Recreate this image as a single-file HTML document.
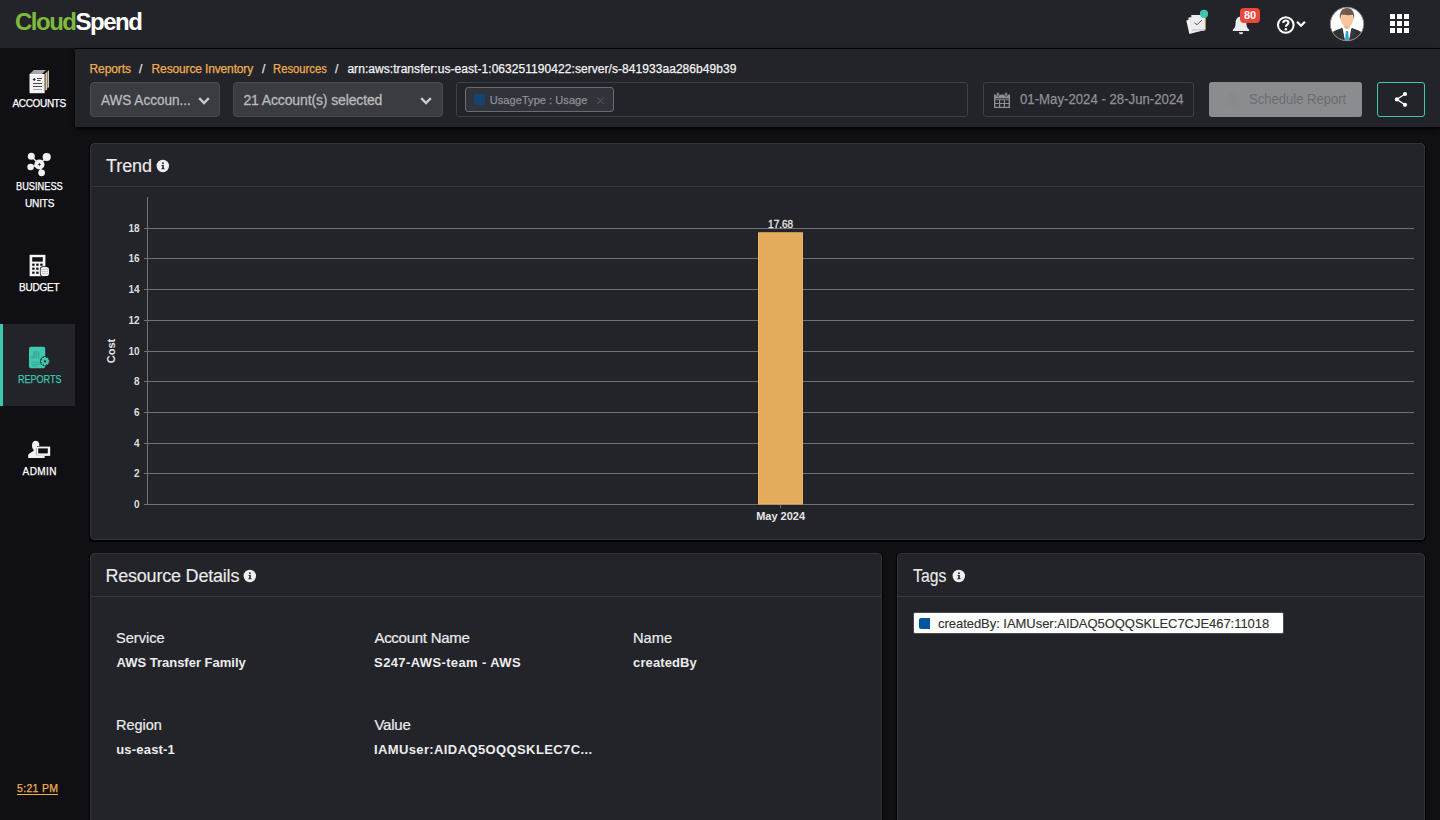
<!DOCTYPE html>
<html lang="en">
<head>
<meta charset="utf-8">
<title>CloudSpend - Resource</title>
<style>
*{box-sizing:border-box;margin:0;padding:0}
html,body{width:1440px;height:820px;overflow:hidden;background:#101014;font-family:"Liberation Sans",sans-serif;color:#e8e8e8}
.abs{position:absolute;white-space:nowrap}
#header{position:absolute;left:0;top:0;width:1440px;height:48px;background:#23242a}
#hline{position:absolute;left:75px;top:48px;width:1365px;height:1px;background:#050506}
#logo{position:absolute;left:15px;top:7px;font-size:24px;font-weight:bold;letter-spacing:-1.5px;line-height:30px;white-space:nowrap}
#logo .g{color:#7fba3c}
#logo .w{color:#fff}
#sidebar{position:absolute;left:0;top:48px;width:75px;height:772px;background:#101014}
.nav{-webkit-text-stroke:0.25px;position:absolute;left:0;width:75px;text-align:center;font-size:10px;color:#fff;line-height:16px;white-space:nowrap}
.nav.active{color:#3cc7b0}
#navact{position:absolute;left:0;top:324px;width:75px;height:82px;background:#23242a}
#navbar{position:absolute;left:0;top:324px;width:3px;height:82px;background:#3cc7b0}
#toolbar{position:absolute;left:75px;top:49px;width:1365px;height:78px;background:#23242a;box-shadow:0 2px 4px rgba(0,0,0,.85)}
.crumb{-webkit-text-stroke:0.25px;position:absolute;top:61px;font-size:12px;line-height:16px;white-space:nowrap;color:#f0ad4e}
.sep{color:#e0e0e0}
.dd{position:absolute;top:82px;height:35px;background:#3b3c41;border:1px solid #4b4c51;border-radius:4px}
.ddt{-webkit-text-stroke:0.3px;position:absolute;top:92px;font-size:14px;line-height:17px;color:#b9babd;white-space:nowrap}
.panel{position:absolute;background:#23242a;border:1px solid #34353a;border-radius:4px;box-shadow:0 1px 1px 0.5px #000}
.ptitle{-webkit-text-stroke:0.12px;position:absolute;font-size:18px;line-height:22px;color:#ececec;white-space:nowrap}
.pline{position:absolute;height:1px;background:#36373c}
.lbl{-webkit-text-stroke:0.2px;position:absolute;font-size:15px;line-height:18px;color:#ececec;white-space:nowrap}
.val{position:absolute;font-size:13px;line-height:16px;color:#ececec;font-weight:bold;white-space:nowrap}
</style>
</head>
<body>
<div id="header"></div>
<div id="hline"></div>
<div id="logo"><span class="g">Cloud</span><span class="w">Spend</span></div>

<!-- header icons -->
<svg class="abs" style="left:1180px;top:5px" width="35" height="35" viewBox="1180 5 35 35">
  <path d="M1186.3 20.6 L1199.6 16.6 L1203.6 30.2 L1189.4 34.1 Z" fill="#f1f1f3"/>
  <path d="M1188.6 17.6 L1202 15.8 L1204.8 30.4 L1190.6 32.2 Z" fill="#e4e4ea"/>
  <path d="M1188.9 17.9 L1190.8 32 " stroke="#fff" stroke-width="0.8"/>
  <rect x="1191.3" y="15" width="14.2" height="14.6" fill="#ededee"/>
  <path d="M1191.6 29.9 H1205.3" stroke="#b5b5b8" stroke-width="0.7"/>
  <path d="M1205.3 17 V29.8" stroke="#e0a040" stroke-width="0.7"/>
  <path d="M1194.4 22.8 L1197 24.7 L1202 20" fill="none" stroke="#4d3f80" stroke-width="0.9"/>
  <circle cx="1204" cy="13.9" r="4.1" fill="#3fc4b0"/>
</svg>
<svg class="abs" style="left:1230px;top:14px" width="22" height="22" viewBox="0 0 22 22">
  <path d="M11 2.6 C7.2 2.6 5.6 5.8 5.6 9 C5.6 12.6 4.6 14.2 2.8 15.8 V16.9 H19.2 V15.8 C17.4 14.2 16.4 12.6 16.4 9 C16.4 5.8 14.8 2.6 11 2.6 Z" fill="#ececec"/>
  <path d="M8.8 18.2 H13.2 C13.2 19.4 12.2 20.2 11 20.2 C9.8 20.2 8.8 19.4 8.8 18.2 Z" fill="#ececec"/>
</svg>
<div class="abs" id="badge" style="left:1240px;top:8px;width:20px;height:15px;background:#e8473a;border-radius:4px"></div>
<div class="abs" id="badget" style="left:1244px;top:9px;font-size:11px;line-height:13px;font-weight:bold;color:#fff;letter-spacing:-0.2px">80</div>
<svg class="abs" style="left:1275px;top:14px" width="36" height="22" viewBox="0 0 36 22">
  <circle cx="10.8" cy="11" r="7.8" fill="none" stroke="#fff" stroke-width="2"/>
  <path d="M8.3 8.9 C8.3 7.3 9.4 6.5 10.8 6.5 C12.3 6.5 13.4 7.4 13.4 8.7 C13.4 10.6 10.9 10.6 10.9 12.7" fill="none" stroke="#fff" stroke-width="2.1"/>
  <circle cx="10.9" cy="15.3" r="1.3" fill="#fff"/>
  <path d="M22 7.8 L26 11.8 L30 7.8" fill="none" stroke="#fff" stroke-width="2.2"/>
</svg>
<svg class="abs" style="left:1329px;top:6px" width="36" height="36" viewBox="0 0 36 36">
  <defs><clipPath id="avc"><circle cx="18" cy="18" r="16.3"/></clipPath></defs>
  <circle cx="18" cy="18" r="16.7" fill="#fff" stroke="#8a8a8a" stroke-width="1"/>
  <g clip-path="url(#avc)">
    <path d="M1 36 V30 C1 26 8 24 13 22 L18 27 L23 22 C28 24 35 26 35 30 V36 Z" fill="#303030"/>
    <path d="M13.6 21.5 L18 20 L22.4 21.5 L20 36 H16 Z" fill="#fff"/>
    <path d="M16.9 25 H19.1 L20 34.5 H16 Z" fill="#2ea3dc"/>
    <path d="M13 22 L15.8 34 L10 28 L12.4 26.4 L10.4 24.6 Z" fill="#3b3b3b"/>
    <path d="M23 22 L20.2 34 L26 28 L23.6 26.4 L25.6 24.6 Z" fill="#3b3b3b"/>
    <path d="M15.2 17 H20.8 V21.6 L18 23.4 L15.2 21.6 Z" fill="#e9b68c"/>
    <ellipse cx="18" cy="13.5" rx="6.2" ry="6.9" fill="#f6c79c"/>
    <path d="M11.2 14 C9.6 6.5 13 2 18.1 2 C23.2 2 26.4 6.5 24.8 14 C24.7 11.5 24.1 9.6 23.3 8.7 C20.5 9.5 15 9.1 12.9 8.5 C12 9.5 11.4 11.5 11.2 14 Z" fill="#6e5c4b"/>
  </g>
</svg>
<svg class="abs" style="left:1390px;top:14px" width="19" height="19" viewBox="0 0 19 19" fill="#fff">
  <rect x="0" y="0" width="5" height="5"/><rect x="7" y="0" width="5" height="5"/><rect x="14" y="0" width="5" height="5"/>
  <rect x="0" y="7" width="5" height="5"/><rect x="7" y="7" width="5" height="5"/><rect x="14" y="7" width="5" height="5"/>
  <rect x="0" y="14" width="5" height="5"/><rect x="7" y="14" width="5" height="5"/><rect x="14" y="14" width="5" height="5"/>
</svg>

<div id="sidebar"></div>
<div id="navact"></div><div id="navbar"></div>

<!-- sidebar icons -->
<svg class="abs" style="left:29px;top:69px" width="21" height="25" viewBox="0 0 21 25">
  <path d="M0.6 5.2 L4.8 1 H17.2 L13.2 5.2 Z" fill="#a7a7ab"/>
  <path d="M16.5 4.4 L17.9 3 V20.2 L16.5 21.8 Z" fill="#efefef"/>
  <path d="M18.5 2.4 L19.9 1.2 V18 L18.5 19.6 Z" fill="#efefef"/>
  <path d="M19.6 1.4 L19.9 1.2 V18 L19.6 18.3 Z" fill="#e0a040"/>
  <path d="M17.6 3.3 L17.9 3 V20.2 L17.6 20.5 Z" fill="#e0a040"/>
  <rect x="0.5" y="5" width="15.1" height="19.2" fill="#f3f3f3"/>
  <path d="M15.2 5 V24.2 H15.7 V5 Z" fill="#e0a040"/>
  <path d="M13 5.1 L15.7 2.4 L15.7 5.1 Z" fill="#15151a"/>
  <path d="M15 3.1 L17.7 0.6 L17.9 2.8 Z" fill="#15151a"/>
  <rect x="8" y="9" width="5" height="1" fill="#4a4b52"/>
  <rect x="8" y="11" width="3.6" height="1" fill="#4a4b52"/>
  <path d="M5.2 8.9 L6.8 10.5 L5.2 12.1 L3.6 10.5 Z" fill="#22222a"/>
  <rect x="4" y="14" width="9" height="1" fill="#4a4b52"/>
  <rect x="4" y="17" width="9" height="1" fill="#4a4b52"/>
  <rect x="4" y="20" width="9" height="1" fill="#a9a9ad"/>
</svg>
<svg class="abs" style="left:26px;top:151px" width="26" height="26" viewBox="0 0 26 26">
  <g stroke="#f0f0f0" stroke-width="1.3">
    <line x1="13.4" y1="13.5" x2="5.3" y2="5.2"/><line x1="13.4" y1="13.5" x2="20.7" y2="6"/>
    <line x1="13.4" y1="13.5" x2="4.6" y2="16"/><line x1="13.4" y1="13.5" x2="15.6" y2="21.8"/>
  </g>
  <g fill="#f0f0f0">
    <circle cx="13.4" cy="13.5" r="5.1"/><circle cx="5.3" cy="5.2" r="3.5"/><circle cx="20.7" cy="6" r="4.1"/>
    <circle cx="4.6" cy="16" r="3.3"/><circle cx="15.6" cy="21.8" r="3.4"/>
  </g>
  <path d="M13.4 12.2 V14.8 M12.1 13.5 H14.7" stroke="#22232a" stroke-width="0.9"/>
</svg>
<svg class="abs" style="left:29px;top:254px" width="21" height="23" viewBox="0 0 21 23">
  <rect x="0.6" y="0.8" width="15.8" height="21.4" fill="#f4f4f4"/>
  <rect x="3.2" y="3.2" width="10.6" height="4.4" fill="#111115"/>
  <g fill="#111115">
    <rect x="3.2" y="9.6" width="2.4" height="2.2"/><rect x="7.2" y="9.6" width="2.4" height="2.2"/><rect x="11.2" y="9.6" width="2.4" height="2.2"/>
    <rect x="3.2" y="13.6" width="2.4" height="2.2"/><rect x="7.2" y="13.6" width="2.4" height="2.2"/>
    <rect x="3.2" y="17.6" width="2.4" height="2.2"/><rect x="7.2" y="17.6" width="2.4" height="2.2"/>
  </g>
  <rect x="10.9" y="12.2" width="9.6" height="10.4" rx="3.2" fill="#111115"/>
  <rect x="11.6" y="12.9" width="8.4" height="9.2" rx="2.8" fill="#f4f4f4"/>
  <g fill="#b9b9bd"><rect x="12.4" y="15.2" width="6.8" height="0.7"/><rect x="12.4" y="17.2" width="6.8" height="0.7"/><rect x="12.4" y="19.2" width="6.8" height="0.7"/></g>
</svg>
<svg class="abs" style="left:28px;top:346px" width="23" height="23" viewBox="0 0 23 23">
  <rect x="1" y="0.8" width="16.2" height="21.4" rx="1.8" fill="#41c8b3"/>
  <g fill="#36a997">
    <rect x="3.4" y="9.8" width="1.6" height="2.8"/><rect x="5.4" y="5.2" width="1.6" height="7.4"/><rect x="7.6" y="5.2" width="1.6" height="7.4"/><rect x="9.8" y="5.2" width="1.6" height="7.4"/>
    <rect x="3.4" y="15.8" width="8.6" height="0.9"/><rect x="3.4" y="17.8" width="8.6" height="0.9"/><rect x="3.4" y="19.6" width="6.6" height="0.9"/>
  </g>
  <circle cx="17" cy="15.3" r="5" fill="#23242a"/>
  <g transform="translate(17,15.3)" fill="#41c8b3">
    <circle r="3.3"/>
    <rect x="-1.1" y="-4.3" width="2.2" height="8.6"/>
    <rect x="-1.1" y="-4.3" width="2.2" height="8.6" transform="rotate(45)"/>
    <rect x="-1.1" y="-4.3" width="2.2" height="8.6" transform="rotate(90)"/>
    <rect x="-1.1" y="-4.3" width="2.2" height="8.6" transform="rotate(135)"/>
    <circle r="1.1" fill="#1c1d22"/>
  </g>
</svg>
<svg class="abs" style="left:27px;top:440px" width="25" height="19" viewBox="0 0 25 19">
  <path d="M9 0.8 C6.4 0.8 5 2.8 5 5.4 C5 7.6 5.8 9 6.8 10 C6.8 12 2 12.6 1.2 15 V17.9 H17.6 V16 H10 V6 H12.4 C12.4 3 11.4 0.8 9 0.8 Z" fill="#f2f2f2"/>
  <rect x="9.3" y="6.6" width="13.9" height="9.3" fill="#f2f2f2"/>
  <rect x="11.2" y="8.4" width="9.6" height="5" fill="#111115"/>
  <path d="M9.4 8 V15.6" stroke="#9a6fc0" stroke-width="0.6"/>
</svg>

<div class="nav" id="n1" style="left:12.50px;top:96px;letter-spacing:-0.332px;width:auto;text-align:left;transform:scale(1,1);transform-origin:0 72%">ACCOUNTS</div>
<div class="nav" id="n2" style="left:15.70px;top:179px;letter-spacing:0.000px;width:auto;text-align:left;transform:scale(0.9233,1);transform-origin:0 72%">BUSINESS</div>
<div class="nav" id="n2b" style="left:25.00px;top:196px;letter-spacing:-0.125px;width:auto;text-align:left;transform:scale(1,1);transform-origin:0 72%">UNITS</div>
<div class="nav" id="n3" style="left:19.00px;top:280px;letter-spacing:-0.234px;width:auto;text-align:left;transform:scale(1,1);transform-origin:0 72%">BUDGET</div>
<div class="nav active" id="n4" style="left:17.90px;top:372px;letter-spacing:0.000px;width:auto;text-align:left;transform:scale(0.9030,1);transform-origin:0 72%">REPORTS</div>
<div class="nav" id="n5" style="left:22.60px;top:464px;letter-spacing:0.391px;width:auto;text-align:left;transform:scale(1,1);transform-origin:0 72%">ADMIN</div>
<div class="abs" id="clock" style="left:17.00px;top:780px;font-size:10.5px;line-height:16px;color:#f0ad4e;letter-spacing:0.315px;-webkit-text-stroke:0.25px">5:21 PM</div>
<div class="abs" style="left:17px;top:794px;width:41px;height:1px;background:#f0ad4e"></div>

<div id="toolbar"></div>
<div class="crumb" id="c1" style="left:89.50px;;letter-spacing:-0.081px">Reports</div>
<div class="crumb sep" id="s1" style="left:139px">/</div>
<div class="crumb" id="c2" style="left:151.60px;;letter-spacing:-0.143px">Resource Inventory</div>
<div class="crumb sep" id="s2" style="left:262px">/</div>
<div class="crumb" id="c3" style="left:273.20px;;letter-spacing:0.000px;transform:scaleX(0.9388);transform-origin:0 50%">Resources</div>
<div class="crumb sep" id="s3" style="left:335px">/</div>
<div class="crumb" id="c4" style="left:347.40px;color:#f2f2f2;letter-spacing:0.056px">arn:aws:transfer:us-east-1:063251190422:server/s-841933aa286b49b39</div>

<div class="dd" style="left:90px;width:130px"></div>
<div class="ddt" id="d1" style="left:101.40px;;letter-spacing:0.000px;transform:scaleX(0.9671);transform-origin:0 50%">AWS Accoun...</div>
<svg class="abs" style="left:197px;top:95px" width="14" height="12" viewBox="0 0 14 12"><path d="M2.2 3.2 L7 8 L11.8 3.2" fill="none" stroke="#c9cacc" stroke-width="2.4"/></svg>
<div class="dd" style="left:233px;width:210px"></div>
<div class="ddt" id="d2" style="left:243.40px;;letter-spacing:-0.125px">21 Account(s) selected</div>
<svg class="abs" style="left:419px;top:95px" width="14" height="12" viewBox="0 0 14 12"><path d="M2.2 3.2 L7 8 L11.8 3.2" fill="none" stroke="#c9cacc" stroke-width="2.4"/></svg>

<div class="abs" style="left:456px;top:82px;width:512px;height:35px;border:1px solid #3e3f44;border-radius:3px"></div>
<div class="abs" style="left:465px;top:87px;width:149px;height:25px;border:1px solid #696b70;border-radius:3px;background:#31333a"></div>
<div class="abs" style="left:474px;top:94px;width:11px;height:11px;background:#15426f"></div>
<div class="abs" id="chipt" style="left:489.80px;top:92px;font-size:11px;line-height:16px;color:#8e9095;letter-spacing:0.060px;-webkit-text-stroke:0.25px">UsageType : Usage</div>
<svg class="abs" style="left:596px;top:96px" width="9" height="9" viewBox="0 0 9 9"><path d="M1.2 1.4 L7.8 8 M7.8 1.4 L1.2 8" stroke="#5c5e63" stroke-width="1"/></svg>

<div class="abs" style="left:983px;top:82px;width:211px;height:35px;border:1px solid #3e3f44;border-radius:3px"></div>
<svg class="abs" style="left:993px;top:92px" width="18" height="17" viewBox="0 0 18 17">
  <path d="M1 2.6 H17 V16 H1 Z" fill="#8d8f93"/>
  <rect x="3.6" y="0.6" width="2.6" height="3.6" rx="0.8" fill="#8d8f93" stroke="#23242a" stroke-width="0.6"/>
  <rect x="11.8" y="0.6" width="2.6" height="3.6" rx="0.8" fill="#8d8f93" stroke="#23242a" stroke-width="0.6"/>
  <g fill="#23242a">
    <rect x="2.2" y="6.4" width="13.6" height="0.9"/>
    <rect x="2.4" y="8.2" width="3.6" height="2.8"/><rect x="7.2" y="8.2" width="3.6" height="2.8"/><rect x="12" y="8.2" width="3.6" height="2.8"/>
    <rect x="2.4" y="12" width="3.6" height="2.8"/><rect x="7.2" y="12" width="3.6" height="2.8"/><rect x="12" y="12" width="3.6" height="2.8"/>
  </g>
</svg>
<div class="abs" id="datet" style="left:1020.00px;top:91px;font-size:14px;line-height:17px;color:#8d8f93;letter-spacing:0.000px;transform:scaleX(0.9427);transform-origin:0 50%;-webkit-text-stroke:0.25px">01-May-2024 - 28-Jun-2024</div>

<div class="abs" style="left:1209px;top:82px;width:153px;height:35px;background:#8b8c90;border-radius:3px"></div>
<svg class="abs" style="left:1226px;top:92px" width="16" height="16" viewBox="0 0 16 16"><path d="M2 1 H9 L12 4 V8 A4 4 0 1 1 8 14.6 H2 Z" fill="#888a8d"/></svg>
<div class="abs" id="schedt" style="left:1248.80px;top:91px;font-size:14px;line-height:17px;color:#6b6c71;letter-spacing:0.000px;transform:scaleX(0.9320);transform-origin:0 50%">Schedule Report</div>
<div class="abs" style="left:1377px;top:82px;width:48px;height:35px;border:1px solid #3cc7b0;border-radius:3px;background:#23242a"></div>
<svg class="abs" style="left:1393px;top:90px" width="16" height="19" viewBox="0 0 16 19">
  <path d="M12 4 L3.8 9.4 L12 14.8" fill="none" stroke="#fff" stroke-width="1.3"/>
  <circle cx="12" cy="4" r="2.1" fill="#fff"/><circle cx="3.9" cy="9.4" r="2.1" fill="#fff"/><circle cx="12" cy="14.8" r="2.1" fill="#fff"/>
</svg>

<!-- Trend panel -->
<div class="panel" id="trend" style="left:90px;top:143px;width:1335px;height:397px"></div>
<div class="ptitle" id="t1" style="left:105.90px;top:155px;letter-spacing:-0.040px">Trend</div>
<svg class="abs info" style="left:156px;top:159px" width="14" height="14" viewBox="0 0 14 14"><circle cx="6.8" cy="7" r="6.2" fill="#f0f0f0"/><path d="M5.6 5.9 H7.8 V9.2 H8.6 V10.2 H5.4 V9.2 H6.2 V6.9 H5.6 Z" fill="#23242a"/><circle cx="6.95" cy="4.3" r="0.95" fill="#23242a"/></svg>
<div class="pline" style="left:91px;top:186px;width:1333px"></div>

<svg class="abs" id="chart" style="left:91px;top:187px" width="1333" height="352" viewBox="91 187 1333 352">
  <g stroke="#707175" stroke-width="1" shape-rendering="crispEdges">
    <line x1="147.5" y1="197" x2="147.5" y2="505"/>
    <line x1="144" y1="228.5" x2="1414" y2="228.5"/>
    <line x1="144" y1="258.5" x2="1414" y2="258.5"/>
    <line x1="144" y1="289.5" x2="1414" y2="289.5"/>
    <line x1="144" y1="320.5" x2="1414" y2="320.5"/>
    <line x1="144" y1="351.5" x2="1414" y2="351.5"/>
    <line x1="144" y1="381.5" x2="1414" y2="381.5"/>
    <line x1="144" y1="412.5" x2="1414" y2="412.5"/>
    <line x1="144" y1="443.5" x2="1414" y2="443.5"/>
    <line x1="144" y1="473.5" x2="1414" y2="473.5"/>
    <line x1="144" y1="504.5" x2="1414" y2="504.5"/>
    <line x1="780.5" y1="505" x2="780.5" y2="508"/>
  </g>
  <rect x="758.5" y="232.8" width="44" height="271.2" fill="#e5ab5c" stroke="#f0b45e" stroke-width="1"/>
  <g font-family="Liberation Sans, sans-serif" font-size="10" font-weight="bold" fill="#dedede" text-anchor="end">
    <text x="139.5" y="232">18</text><text x="139.5" y="262">16</text><text x="139.5" y="293">14</text><text x="139.5" y="324">12</text>
    <text x="139.5" y="355">10</text><text x="139.5" y="385">8</text><text x="139.5" y="416">6</text><text x="139.5" y="447">4</text>
    <text x="139.5" y="477">2</text><text x="139.5" y="508">0</text>
  </g>
  <text x="780.6" y="228" font-family="Liberation Sans, sans-serif" font-size="10" fill="#e6e6e6" stroke="#e6e6e6" stroke-width="0.3" text-anchor="middle">17.68</text>
  <text x="780.6" y="520" font-family="Liberation Sans, sans-serif" font-size="11" font-weight="bold" fill="#e6e6e6" text-anchor="middle">May 2024</text>
  <text transform="translate(115.2,351) rotate(-90)" font-family="Liberation Sans, sans-serif" font-size="11" font-weight="bold" fill="#e6e6e6" text-anchor="middle">Cost</text>
</svg>

<!-- Resource Details -->
<div class="panel" id="rd" style="left:90px;top:553px;width:792px;height:280px"></div>
<div class="ptitle" id="t2" style="left:105.40px;top:565px;letter-spacing:-0.204px">Resource Details</div>
<svg class="abs info" style="left:243px;top:569px" width="14" height="14" viewBox="0 0 14 14"><circle cx="6.8" cy="7" r="6.2" fill="#f0f0f0"/><path d="M5.6 5.9 H7.8 V9.2 H8.6 V10.2 H5.4 V9.2 H6.2 V6.9 H5.6 Z" fill="#23242a"/><circle cx="6.95" cy="4.3" r="0.95" fill="#23242a"/></svg>
<div class="pline" style="left:91px;top:596px;width:790px"></div>

<div class="lbl" id="l1" style="left:115.60px;top:629px;letter-spacing:0.000px;transform:scaleX(0.9704);transform-origin:0 50%">Service</div>
<div class="val" id="v1" style="left:116.50px;top:655px;letter-spacing:-0.006px">AWS Transfer Family</div>
<div class="lbl" id="l2" style="left:374.40px;top:629px;letter-spacing:-0.262px">Account Name</div>
<div class="val" id="v2" style="left:374.10px;top:655px;letter-spacing:0.379px">S247-AWS-team - AWS</div>
<div class="lbl" id="l3" style="left:632.70px;top:629px;letter-spacing:0.000px;transform:scaleX(0.9771);transform-origin:0 50%">Name</div>
<div class="val" id="v3" style="left:633.10px;top:655px;letter-spacing:0.109px">createdBy</div>
<div class="lbl" id="l4" style="left:116.00px;top:716px;letter-spacing:0.000px;transform:scaleX(0.9622);transform-origin:0 50%">Region</div>
<div class="val" id="v4" style="left:116.20px;top:742px;letter-spacing:0.197px">us-east-1</div>
<div class="lbl" id="l5" style="left:374.40px;top:716px;letter-spacing:-0.216px">Value</div>
<div class="val" id="v5" style="left:373.90px;top:742px;letter-spacing:0.390px">IAMUser:AIDAQ5OQQSKLEC7C...</div>

<!-- Tags -->
<div class="panel" id="tags" style="left:897px;top:553px;width:528px;height:280px"></div>
<div class="ptitle" id="t3" style="left:913.20px;top:565px;letter-spacing:0.000px;transform:scaleX(0.8774);transform-origin:0 50%">Tags</div>
<svg class="abs info" style="left:952px;top:569px" width="14" height="14" viewBox="0 0 14 14"><circle cx="6.8" cy="7" r="6.2" fill="#f0f0f0"/><path d="M5.6 5.9 H7.8 V9.2 H8.6 V10.2 H5.4 V9.2 H6.2 V6.9 H5.6 Z" fill="#23242a"/><circle cx="6.95" cy="4.3" r="0.95" fill="#23242a"/></svg>
<div class="pline" style="left:898px;top:596px;width:526px"></div>
<div class="abs" style="left:913px;top:612px;width:371px;height:22px;background:#fff;border:1px solid #47494e;border-radius:2px"></div>
<div class="abs" style="left:919px;top:618px;width:11px;height:11px;background:#00569e;border-radius:2px 0 0 2px"></div>
<div class="abs" id="tagt" style="left:938.00px;top:616px;font-size:13px;line-height:16px;color:#333;letter-spacing:-0.036px;-webkit-text-stroke:0.15px">createdBy: IAMUser:AIDAQ5OQQSKLEC7CJE467:11018</div>

</body>
</html>
